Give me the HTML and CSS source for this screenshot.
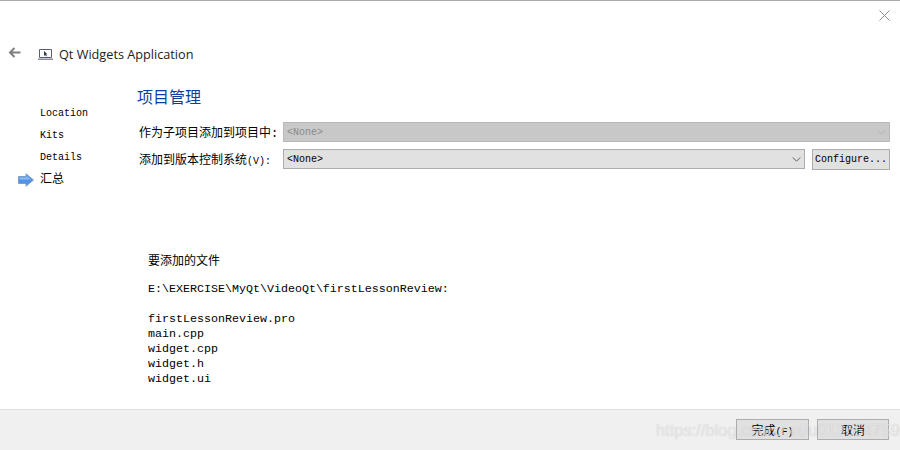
FILE: index.html
```html
<!DOCTYPE html>
<html lang="en">
<head>
  <meta charset="UTF-8" />
  <title>Qt Widgets Application</title>
  <link rel="stylesheet" href="styles.css">
</head>
<body>
  <div class="wizard">
    <div class="top-bar">
      <svg class="close-icon" viewBox="0 0 11 11"><path d="M0.5 0.5L10.5 10.5M10.5 0.5L0.5 10.5" stroke="#8f8f8f" fill="none"/></svg>
    </div>

    <div class="title-row">
      <svg class="back-icon" viewBox="0 0 13 11"><path d="M12.5 5.5H2M6.5 1L2 5.5L6.5 10" stroke="#808080" stroke-width="2" fill="none"/></svg>
      <svg class="app-icon" viewBox="0 0 15 12"><path d="M1.5 1.5H13.5V9.5H1.5Z" fill="#fff" stroke="#5a5e72"/><path d="M0 10.5H15V12H0Z" fill="#8a8c9c"/><path d="M6 3L6 8L7.2 7L8.2 8.6L9 8.1L8 6.6L9.4 6.3Z" fill="#33384c"/></svg>
      <span class="app-name">Qt Widgets Application</span>
    </div>

    <div class="main">
      <ul class="steps">
        <li>Location</li>
        <li>Kits</li>
        <li>Details</li>
        <li class="current">
          <svg class="step-arrow" viewBox="0 0 16 14"><path d="M0.5 3.5H8V0.8L15.5 7L8 13.2V10.5H0.5Z" fill="#4f94e8" stroke="#7f9fc8"/><path d="M1.5 4.5H8.5V3L13 6.5H1.5Z" fill="#8fbdf0"/></svg>
          <span>汇总</span>
        </li>
      </ul>

      <div class="content">
        <h1 class="page-title">项目管理</h1>

        <div class="form-row">
          <label>作为子项目添加到项目中:</label>
          <div class="combo combo-disabled">
            <span>&lt;None&gt;</span>
            <svg class="chevron" viewBox="0 0 10 6"><path d="M0.5 0.5L5 5L9.5 0.5" stroke="#aeaeae" fill="none"/></svg>
          </div>
        </div>

        <div class="form-row form-row-second">
          <label>添加到版本控制系统<span class="latin">(V):</span></label>
          <div class="combo">
            <span>&lt;None&gt;</span>
            <svg class="chevron" viewBox="0 0 10 6"><path d="M0.5 0.5L5 5L9.5 0.5" stroke="#444" fill="none"/></svg>
          </div>
          <button class="btn btn-configure">Configure...</button>
        </div>

        <div class="summary">
          <p class="summary-title">要添加的文件</p>
          <p class="file-path">E:\EXERCISE\MyQt\VideoQt\firstLessonReview:</p>
          <ul class="file-list">
            <li>firstLessonReview.pro</li>
            <li>main.cpp</li>
            <li>widget.cpp</li>
            <li>widget.h</li>
            <li>widget.ui</li>
          </ul>
        </div>
      </div>
    </div>

    <div class="footer">
      <button class="btn btn-footer">完成<span class="latin">(F)</span></button>
      <button class="btn btn-footer btn-cancel">取消</button>
    </div>
  </div>

  <div class="watermark">https://blog.csdn.net/u013654759</div>
</body>
</html>
```
FILE: styles.css
```css
body {
  margin: 0;
  background: #fff;
  color: #000;
  overflow: hidden;
}

.latin {
  font-size: 10px;
}

.wizard {
  display: flex;
  flex-direction: column;
  width: 900px;
  height: 450px;
  border-top: 1px solid #aaa;
  box-sizing: border-box;
}

.top-bar {
  display: flex;
  justify-content: flex-end;
  height: 40px;
  padding: 9px 10px 0 0;
  box-sizing: border-box;
}

.close-icon {
  width: 11px;
  height: 11px;
}

.title-row {
  display: flex;
  align-items: center;
  height: 26px;
  padding-left: 8px;
}

.back-icon {
  width: 13px;
  height: 11px;
  margin-right: 17px;
  margin-top: -3px;
}

.app-icon {
  width: 15px;
  height: 12px;
  margin-right: 6px;
}

.app-name {
  font-family: "Open Sans", sans-serif;
  font-size: 12.7px;
  color: #222;
}

.main {
  display: flex;
  flex: 1;
  min-height: 0;
}

.steps {
  list-style: none;
  flex: none;
  margin: 0;
  padding: 36px 0 0 40px;
  width: 137px;
  box-sizing: border-box;
  font-family: "Liberation Mono", "Noto Sans CJK SC", monospace;
  font-size: 10px;
}

.steps li {
  position: relative;
  height: 22px;
  line-height: 22px;
}

.steps .current {
  font-size: 12px;
}

.step-arrow {
  position: absolute;
  left: -22px;
  top: 4px;
  width: 16px;
  height: 14px;
}

.content {
  flex: 1;
  padding-right: 10px;
}

.page-title {
  margin: 0;
  padding-top: 18px;
  height: 55px;
  box-sizing: border-box;
  font-family: "Noto Sans CJK SC", sans-serif;
  font-size: 16px;
  line-height: 22px;
  font-weight: normal;
  color: #0b3f9f;
}

.form-row {
  display: flex;
  align-items: center;
  height: 20px;
  padding-left: 2px;
  font-family: "Liberation Mono", "Noto Sans CJK SC", monospace;
  font-size: 10px;
}

.form-row-second {
  margin-top: 7px;
}

.form-row label {
  width: 144px;
  flex: none;
  font-size: 12px;
  white-space: nowrap;
}

.combo {
  display: flex;
  flex: 1;
  align-items: center;
  justify-content: space-between;
  height: 20px;
  padding: 0 3px 0 3px;
  background: #e1e1e1;
  border: 1px solid #adadad;
  box-sizing: border-box;
}

.combo-disabled {
  background: #c8c8c8;
  border-color: #b8b8b8;
  color: #8a8a8a;
}

.chevron {
  width: 9px;
  height: 5px;
}

.btn {
  height: 21px;
  padding: 0;
  background: #e1e1e1;
  border: 1px solid #adadad;
  box-sizing: border-box;
  font-family: "Liberation Mono", "Noto Sans CJK SC", monospace;
  font-size: 10px;
  color: #000;
}

.btn-configure {
  width: 78px;
  margin-left: 7px;
  margin-top: 1px;
}

.summary {
  padding: 83px 0 0 11px;
  font-family: "Liberation Mono", "Noto Sans CJK SC", monospace;
  font-size: 11.67px;
  line-height: 15px;
}

.summary p {
  margin: 0;
}

.summary-title {
  font-family: "Noto Sans CJK SC", sans-serif;
  font-size: 12px;
}

.file-path {
  padding-top: 15px;
}

.file-list {
  list-style: none;
  margin: 0;
  padding: 15px 0 0;
}

.footer {
  display: flex;
  justify-content: flex-end;
  gap: 8px;
  height: 41px;
  padding: 9px 11px 0 0;
  background: #f0f0f0;
  border-top: 1px solid #dfdfdf;
  box-sizing: border-box;
}

.btn-footer {
  width: 73px;
  font-size: 12px;
}

.btn-cancel {
  width: 72px;
}

.watermark {
  position: absolute;
  left: 656px;
  top: 420px;
  width: 236px;
  font-family: "Liberation Sans", sans-serif;
  font-size: 16.5px;
  line-height: 20px;
  white-space: nowrap;
  color: rgba(255, 255, 255, 0.55);
  text-shadow: 0 0 1px rgba(110, 110, 110, 0.35);
}
```
